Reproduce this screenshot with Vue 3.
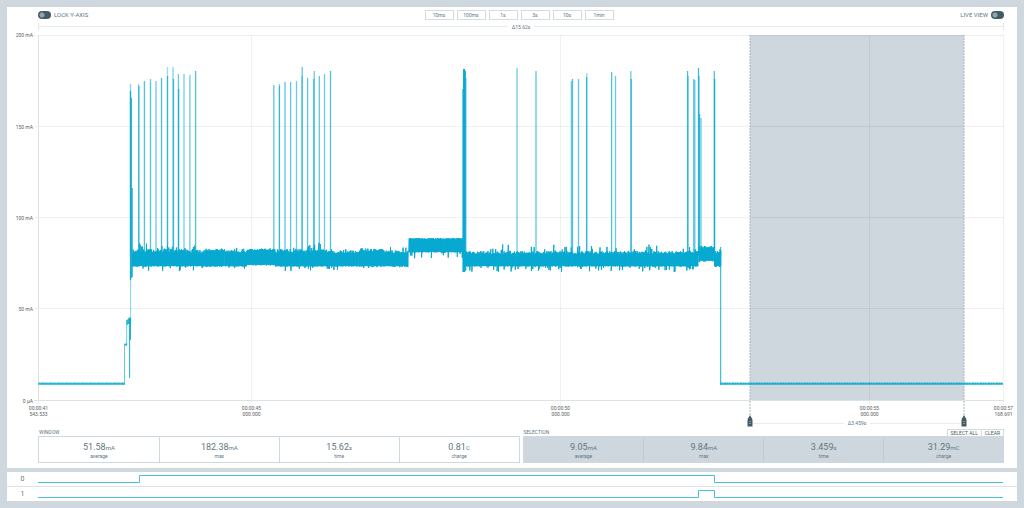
<script setup>
const ranges = ['10ms', '100ms', '1s', '3s', '10s', '1min']

const yTicks = [
  { label: '200 mA', y: 35.5 },
  { label: '150 mA', y: 126.5 },
  { label: '100 mA', y: 217.5 },
  { label: '50 mA', y: 308.5 },
  { label: '0 µA', y: 400.5 }
]
const xTicks = [
  { time: '00:00:41', ms: '543.533', x: 38.5 },
  { time: '00:00:45', ms: '000.000', x: 251.5 },
  { time: '00:00:50', ms: '000.000', x: 560.5 },
  { time: '00:00:55', ms: '000.000', x: 869.5 },
  { time: '00:00:57', ms: '168.691', x: 1003.5 }
]
const selection = { from: 750, to: 964 }

// Plot area in chart units
const plot = { x: 38, y: 35, w: 966, h: 366 }
const px = (x) => ((x - plot.x) / plot.w) * 100 + '%'
const py = (y) => ((y - plot.y) / plot.h) * 100 + '%'

const groups = [
  {
    id: 'window',
    title: 'WINDOW',
    items: [
      { value: '51.58', unit: 'mA', name: 'average' },
      { value: '182.38', unit: 'mA', name: 'max' },
      { value: '15.62', unit: 's', name: 'time' },
      { value: '0.81', unit: 'C', name: 'charge' }
    ]
  },
  {
    id: 'selection',
    title: 'SELECTION',
    items: [
      { value: '9.05', unit: 'mA', name: 'average' },
      { value: '9.84', unit: 'mA', name: 'max' },
      { value: '3.459', unit: 's', name: 'time' },
      { value: '31.29', unit: 'mC', name: 'charge' }
    ]
  }
]

const channels = [
  { name: '0', d: 'M38 10.5H139.5V3.5H714.5V10.5H1003' },
  { name: '1', d: 'M38 10.5H698.5V3.5H714.5V10.5H1003' }
]

// Repeatable noise
let seed = 11
function rand() {
  seed = (seed * 16807) % 2147483647
  return seed / 2147483647
}

// [from, to, top, bottom, jitter, spike up, spike down]
const bands = [
  [132, 196, 253, 266.5, 4, 7, 6],
  [196, 205, 253, 266.5, 3, 3, 2],
  [205, 225, 251, 266.5, 2, 1, 1],
  [225, 247, 253.5, 266.5, 3, 4, 3],
  [247, 275, 250.5, 265, 2, 0, 1],
  [275, 332, 253, 266.5, 4, 7, 5],
  [332, 359, 253.5, 266.5, 3, 3, 4],
  [359, 383, 251.5, 266.5, 3, 3, 3],
  [383, 408.5, 253.5, 266.5, 3, 4, 1],
  [408.5, 463, 239, 252.5, 1, 0, 7],
  [463, 698.5, 254, 266.5, 3, 7, 6],
  [698.5, 714, 249, 261, 3, 2, 1],
  [714, 721, 254, 266.5, 3, 3, 1]
]

function bandPath([from, to, top, bottom, jitter, up, down]) {
  let d = ''
  for (let x = from + 0.5; x < to; x += 0.7) {
    const a = top - rand() * jitter - (rand() > 0.8 ? rand() * up : 0)
    const b = bottom - rand() * 0.6 + (rand() > 0.84 ? rand() * down : 0)
    d += `${d ? 'L' : 'M'}${x.toFixed(1)} ${a.toFixed(1)}V${b.toFixed(1)}`
  }
  return d
}
const bandPaths = bands.map(bandPath)

// [x, top, opacity, bottom]
const spikes = [
  [130.5, 84, 0.5], [130.5, 91, 0.9, 280], [131.4, 98, 0.8, 278], [132.1, 188, 0.9, 277],
  [138.6, 84, 0.5], [138.9, 86, 0.7], [144.4, 81, 0.7], [150.5, 79, 0.6], [150.5, 82, 0.2],
  [156, 81, 0.6], [161.5, 78, 0.75], [167.5, 67, 0.4], [167.5, 76, 0.75],
  [173, 67, 0.5], [173.5, 79, 0.7], [178.4, 74, 0.6], [178.6, 89, 0.8], [184, 74, 0.55],
  [189.9, 75, 0.6], [195.6, 71, 0.7],
  [273.8, 85, 0.65], [279.4, 84, 0.5], [279.4, 86, 0.6], [285, 82, 0.65], [290.6, 82, 0.65],
  [296.5, 81, 0.6], [302.2, 67, 0.65], [302, 76, 0.5], [307.6, 78, 0.65], [314.3, 71, 0.6],
  [313.6, 79, 0.6], [319.3, 76, 0.65], [324.5, 74, 0.6], [330.5, 71, 0.7],
  [463, 89, 0.9, 272], [463.7, 69, 1, 272], [464.5, 69, 1, 272], [465.2, 71, 1, 271], [466, 78, 0.5, 270],
  [517, 68, 0.6], [536, 71, 0.65],
  [571.4, 81, 0.6], [572.5, 79, 0.7], [578.5, 79, 0.65], [586.8, 73, 0.45], [586.6, 77, 0.7],
  [611.6, 72, 0.7], [615.5, 76, 0.6], [630.8, 71, 0.6], [631.3, 79, 0.65],
  [687.6, 71, 0.75], [688.1, 76, 0.5], [693.6, 79, 0.6], [694.8, 80, 0.65],
  [698.5, 68, 0.8], [699, 76, 0.6], [699.6, 114, 0.7], [701, 118, 0.6],
  [714.3, 71, 0.7], [714.6, 79, 0.9], [720.6, 247, 0.75, 385]
]
</script>

<template>
  <main class="page">
    <section class="card chart-card">
      <header class="toolbar">
        <label class="toggle"><input type="checkbox" class="switch" />LOCK Y-AXIS</label>
        <div class="ranges">
          <button v-for="r in ranges" :key="r" type="button">{{ r }}</button>
        </div>
        <label class="toggle live">LIVE VIEW<input type="checkbox" class="switch" /></label>
      </header>

      <div class="span"><span>Δ15.62s</span></div>

      <div class="plot">
        <svg class="trace" viewBox="38 35 966 366" preserveAspectRatio="none" aria-hidden="true">
          <rect :x="selection.from" y="35" :width="selection.to - selection.from" height="366" class="selected" />
          <path v-for="t in yTicks" :key="t.label" :d="`M34 ${t.y}H1004`" class="grid" />
          <path v-for="t in xTicks" :key="t.time" :d="`M${t.x} 35V405`" class="grid" />
          <path d="M38.5 35V401" class="axis" />
          <path d="M34 400.5H1004" class="axis" />
          <path :d="`M${selection.from} 35V415M${selection.to} 35V415`" class="edge" />
          <g class="current">
            <path d="M38.5 383.8H124.5M720.5 383.8H1003" class="idle" />
            <path d="M124.5 385V344" opacity=".6" />
            <path d="M124.5 344.5H127" class="idle" />
            <path d="M126.7 346V320" opacity=".6" />
            <path d="M127.2 325V320M128 324V319M128.8 324V318M129.6 324V317.5M130.3 340V317.5" />
            <path d="M129.6 318V378" opacity=".9" />
            <path d="M130.6 270V338" opacity=".5" />
            <path d="M38.5 383.5H124M721 383.5H1003" class="ripple" />
            <path v-for="(d, i) in bandPaths" :key="i" :d="d" class="band" />
            <path
              v-for="(s, i) in spikes"
              :key="'s' + i"
              :d="`M${s[0]} ${s[1]}V${s[3] || 256}`"
              :opacity="s[2]"
              class="spike"
            />
          </g>
        </svg>
        <span v-for="t in yTicks" :key="t.label" class="y-label" :style="{ top: py(t.y) }">{{ t.label }}</span>
      </div>

      <div class="time-axis">
        <span v-for="t in xTicks" :key="t.time" class="x-label" :style="{ left: px(t.x) }">
          {{ t.time }}<br />{{ t.ms }}
        </span>
        <div class="measure" :style="{ left: px(selection.from), right: px(plot.x + 1004 - selection.to) }">
          <svg class="handle" viewBox="0 0 6 12" aria-hidden="true">
            <path d="M3 0L5 3.5L5.5 5V11.5H0.5V5L1 3.5Z" fill="#455a64" />
            <path d="M2 6.5H4M2 8.5H4" stroke="#90a4ae" stroke-width=".7" />
          </svg>
          <span>Δ3.459s</span>
          <svg class="handle" viewBox="0 0 6 12" aria-hidden="true">
            <path d="M3 0L5 3.5L5.5 5V11.5H0.5V5L1 3.5Z" fill="#455a64" />
            <path d="M2 6.5H4M2 8.5H4" stroke="#90a4ae" stroke-width=".7" />
          </svg>
        </div>
      </div>

      <div class="stats">
        <section v-for="g in groups" :key="g.id" :class="['group', g.id]">
          <div class="group-head">
            <h2>{{ g.title }}</h2>
            <div v-if="g.id === 'selection'" class="actions">
              <button type="button">SELECT ALL</button>
              <button type="button">CLEAR</button>
            </div>
          </div>
          <dl>
            <div v-for="s in g.items" :key="s.name">
              <dd>{{ s.value }}<small>{{ s.unit }}</small></dd>
              <dt>{{ s.name }}</dt>
            </div>
          </dl>
        </section>
      </div>
    </section>

    <section class="card digital">
      <div v-for="c in channels" :key="c.name" class="channel">
        <span>{{ c.name }}</span>
        <svg viewBox="38 0 966 14" preserveAspectRatio="none" aria-hidden="true"><path :d="c.d" /></svg>
      </div>
    </section>
  </main>
</template>

<style>
body {
  margin: 0;
  background: #cfd8de;
}
</style>

<style scoped>
.page {
  box-sizing: border-box;
  min-height: 100vh;
  padding: 7px;
  display: flex;
  flex-direction: column;
  gap: 4px;
  font: 5px/6px Roboto, "Liberation Sans", sans-serif;
  color: #607680;
}
.card {
  background: #fff;
}
.chart-card {
  flex: 1;
  display: flex;
  flex-direction: column;
  padding: 3px 13px 5px 31px;
}
button {
  font: inherit;
  color: inherit;
  background: #fff;
  border: 1px solid #d3dce1;
  padding: 0;
  box-sizing: border-box;
}
.toolbar {
  display: grid;
  grid-template-columns: 1fr auto 1fr;
  align-items: center;
  height: 10px;
}
.toggle {
  display: flex;
  align-items: center;
  gap: 3px;
  font-size: 6px;
}
.live {
  justify-content: flex-end;
}
.switch {
  appearance: none;
  box-sizing: border-box;
  width: 13px;
  height: 8px;
  margin: 0;
  border-radius: 4px;
  background: radial-gradient(circle at 4px 4px, #90a4ae 2px, #455a64 3px);
}
.ranges {
  display: flex;
  gap: 3px;
  margin-right: 4px;
}
.ranges button {
  width: 29px;
  height: 10px;
}
.span {
  display: flex;
  align-items: center;
  height: 7px;
  margin: 3px 0 5px;
  border: solid #dfe5e8;
  border-width: 0 1px;
}
.span::before,
.span::after,
.measure span::before,
.measure span::after {
  content: "";
  flex: 1;
  height: 1px;
  background: #e8ecee;
}
.span span {
  padding: 0 4px;
}
.plot {
  position: relative;
  flex: 1;
  min-height: 200px;
}
.trace {
  position: absolute;
  inset: 0;
  width: 100%;
  height: 100%;
  overflow: visible;
}
.trace path,
.channel path {
  fill: none;
  vector-effect: non-scaling-stroke;
}
.selected {
  fill: #cfd7de;
}
.grid {
  stroke: #000;
  stroke-opacity: 0.06;
}
.axis {
  stroke: #dde2e5;
}
.edge {
  stroke: #a9b8bf;
  stroke-dasharray: 2 1;
}
.current path {
  stroke: #07a9d1;
}
.current .band {
  stroke-linejoin: bevel;
}
.current .spike {
  stroke-width: 1.3;
}
.current .idle {
  stroke-width: 2px;
  stroke-opacity: 0.85;
}
.current .ripple {
  stroke-width: 3px;
  stroke-opacity: 0.35;
  stroke-dasharray: 1 2 2 1 1 1;
}
.y-label {
  position: absolute;
  right: 100%;
  margin-right: 5px;
  transform: translateY(-50%);
  white-space: nowrap;
  color: #616161;
}
.time-axis {
  position: relative;
  height: 28px;
}
.x-label {
  position: absolute;
  top: 4px;
  transform: translateX(-50%);
  text-align: center;
  color: #616161;
}
.measure {
  position: absolute;
  top: 14px;
  display: flex;
  margin: 0 -3px;
}
.handle {
  width: 6px;
  height: 12px;
}
.measure span {
  flex: 1;
  display: flex;
  align-items: center;
  gap: 4px;
  height: 6px;
  margin-top: 5px;
}
.stats {
  display: grid;
  grid-template-columns: 1fr 1fr;
  gap: 3px;
}
.group-head {
  display: flex;
  justify-content: space-between;
  height: 7px;
}
h2 {
  margin: 0 1px;
  font: inherit;
}
.actions {
  display: flex;
}
.actions button {
  height: 7px;
  padding: 0 3px;
  line-height: 5px;
  border-bottom: 0;
  color: #455a64;
}
.actions button + button {
  border-left: 0;
}
dl {
  display: grid;
  grid-template-columns: repeat(4, 1fr);
  margin: 0;
  border: 1px solid #cfd8de;
}
dl > div {
  display: flex;
  flex-direction: column;
  align-items: center;
  padding: 5px 0 3px;
}
dl > div + div {
  border-left: 1px solid #cfd8de;
}
dd {
  margin: 0 0 1px;
  font-size: 9px;
  line-height: 10px;
}
small {
  font-size: 6px;
  line-height: 6px;
}
.selection dl {
  background: #cfd7de;
}
.selection dl > div + div {
  border-color: #bfcbd2;
}
.channel {
  display: grid;
  grid-template-columns: 31px 1fr;
  padding-right: 13px;
  font-size: 7px;
  line-height: 14px;
  text-align: center;
}
.channel + .channel {
  border-top: 1px solid #dce2e6;
}
.channel svg {
  width: 100%;
  height: 14px;
}
.channel path {
  stroke: #45c0dd;
}
</style>
